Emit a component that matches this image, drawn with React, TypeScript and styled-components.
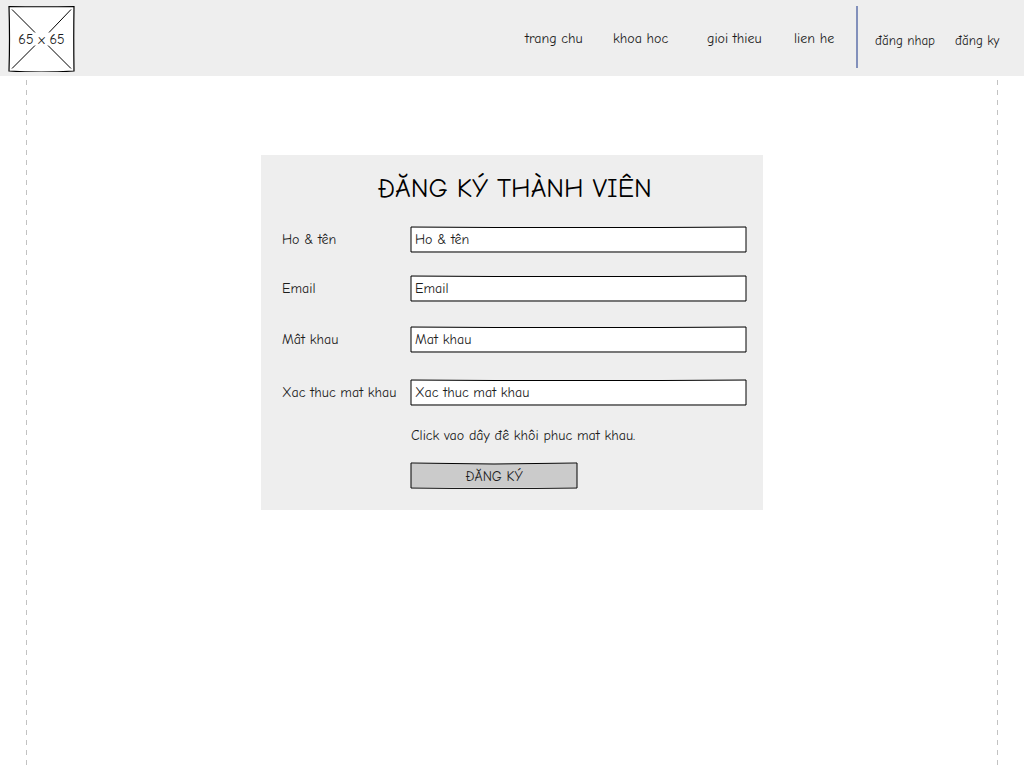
import React from "react";
import styled, { createGlobalStyle } from "styled-components";

const ink = "#1c1c1c";

const GlobalStyle = createGlobalStyle`
  * { box-sizing: border-box; }
  html, body, #root { height: 100%; }
  body {
    margin: 0;
    background: #fff;
    color: ${ink};
    font: 14px/20px "Comic Sans MS", "Comic Neue", Lato, "Open Sans", sans-serif;
  }
`;

const Page = styled.div`
  min-height: 100%;
  display: flex;
  flex-direction: column;
`;

const Header = styled.header`
  display: flex;
  align-items: center;
  height: 76px;
  padding: 0 6px 0 8px;
  background: #eee;
`;

const Logo = styled.a`
  position: relative;
  display: grid;
  place-items: center;
  width: 67px;
  height: 67px;
  margin-right: auto;
  color: ${ink};
  text-decoration: none;
`;

const LogoText = styled.span`
  position: relative;
  padding-top: 3px;
`;

const Sketch = styled.svg`
  position: absolute;
  inset: 0;
  width: 100%;
  height: 100%;
  stroke: #000;
  pointer-events: none;
`;

const Nav = styled.nav<{ $columns: string }>`
  display: grid;
  grid-template-columns: ${(p) => p.$columns};
  padding-top: 2px;
`;

const Account = styled(Nav)`
  padding-top: 6px;
  font-size: 13px;
`;

const NavLink = styled.a`
  color: ${ink};
  text-decoration: none;
  white-space: nowrap;
`;

const Divider = styled.div`
  width: 2px;
  height: 62px;
  margin: 0 17px 2px 0;
  background: #8290bb;
`;

const Body = styled.main`
  flex: 1;
  display: flex;
  justify-content: space-between;
  align-items: stretch;
  padding: 4px 26px 2px;
`;

const Guide = styled.div`
  width: 1px;
  background: repeating-linear-gradient(#c2c2c2 0 5px, transparent 5px 10px);
`;

const Panel = styled.form`
  align-self: flex-start;
  width: 502px;
  margin-top: 75px;
  padding: 18px 16px 21px 21px;
  background: #eee;
`;

const Title = styled.h1`
  margin: 0 0 21px;
  color: #000;
  font-size: 27px;
  line-height: 32px;
  font-weight: 400;
  text-align: center;
`;

const Fields = styled.div`
  display: grid;
  grid-template-columns: 128px 1fr;
  grid-template-rows: 49px 51px 53px 47px 36px 27px;
  align-items: start;
`;

const Label = styled.label`
  line-height: 27px;
`;

const Box = styled.div`
  position: relative;
  height: 27px;
`;

const Input = styled.input`
  display: block;
  width: 100%;
  height: 27px;
  padding: 0 5px;
  border: 0;
  background: linear-gradient(#fff, #fff) center / calc(100% - 2px) calc(100% - 4px) no-repeat;
  color: ${ink};
  font: inherit;
  outline-offset: 2px;
  &::placeholder { color: ${ink}; opacity: 1; }
`;

const RecoverLink = styled.a`
  grid-column: 2;
  padding-left: 1px;
  color: ${ink};
  text-decoration: none;
`;

const Submit = styled.button`
  grid-column: 2;
  position: relative;
  width: 168px;
  height: 27px;
  padding: 2px 0 0;
  border: 0;
  background: linear-gradient(#cbcbcb, #cbcbcb) center / calc(100% - 2px) calc(100% - 4px) no-repeat;
  color: ${ink};
  font: inherit;
  cursor: pointer;
`;

const fields = [
  { id: "name", label: "Ho & tên", hint: "Ho & tên", type: "text" },
  { id: "email", label: "Email", hint: "Email", type: "email" },
  { id: "password", label: "Mât khau", hint: "Mat khau", type: "password" },
  { id: "confirm", label: "Xac thuc mat khau", hint: "Xac thuc mat khau", type: "password" },
];

export default function App() {
  return (
    <Page>
      <GlobalStyle />
      <Header>
        <Logo href="#">
          <Sketch viewBox="0 0 67 67" fill="#fff" strokeWidth="1.2">
            <path d="M1 1.5 Q33 2 66 1.5 Q65.5 33 66 66 Q33 68 1 66 Q2 33 1 1.5Z" />
            <path d="M4 4.500 27 27.500M63 4.500 41 27.500M4 63.500 27 40.500M63 63.500 40 40.500" strokeWidth="1" />
          </Sketch>
          <LogoText>65 x 65</LogoText>
        </Logo>
        <Nav $columns="88px 94px 87px 62px">
          <NavLink href="#">trang chu</NavLink>
          <NavLink href="#">khoa hoc</NavLink>
          <NavLink href="#">gioi thieu</NavLink>
          <NavLink href="#">lien he</NavLink>
        </Nav>
        <Divider />
        <Account $columns="80px 63px">
          <NavLink href="#">đăng nhap</NavLink>
          <NavLink href="#">đăng ky</NavLink>
        </Account>
      </Header>
      <Body>
        <Guide />
        <Panel>
          <Title>ĐĂNG KÝ THÀNH VIÊN</Title>
          <Fields>
            {fields.map((f) => (
              <React.Fragment key={f.id}>
                <Label htmlFor={f.id}>{f.label}</Label>
                <Box>
                  <Input id={f.id} type={f.type} placeholder={f.hint} />
                  <Sketch viewBox="0 0 337 27" preserveAspectRatio="none" fill="none">
                    <path d="M1 1 84 1.5 252 1.5 336 1V26H1Z" />
                  </Sketch>
                </Box>
              </React.Fragment>
            ))}
            <RecoverLink href="#">Click vao dây đê khôi phuc mat khau.</RecoverLink>
            <Submit type="button">
              ĐĂNG KÝ
              <Sketch viewBox="0 0 168 27" preserveAspectRatio="none" fill="none">
                <path d="M1 1 42 1.5 84 2 126 1.5 167 1V26L126 26.4H42L1 26Z" />
              </Sketch>
            </Submit>
          </Fields>
        </Panel>
        <Guide />
      </Body>
    </Page>
  );
}
